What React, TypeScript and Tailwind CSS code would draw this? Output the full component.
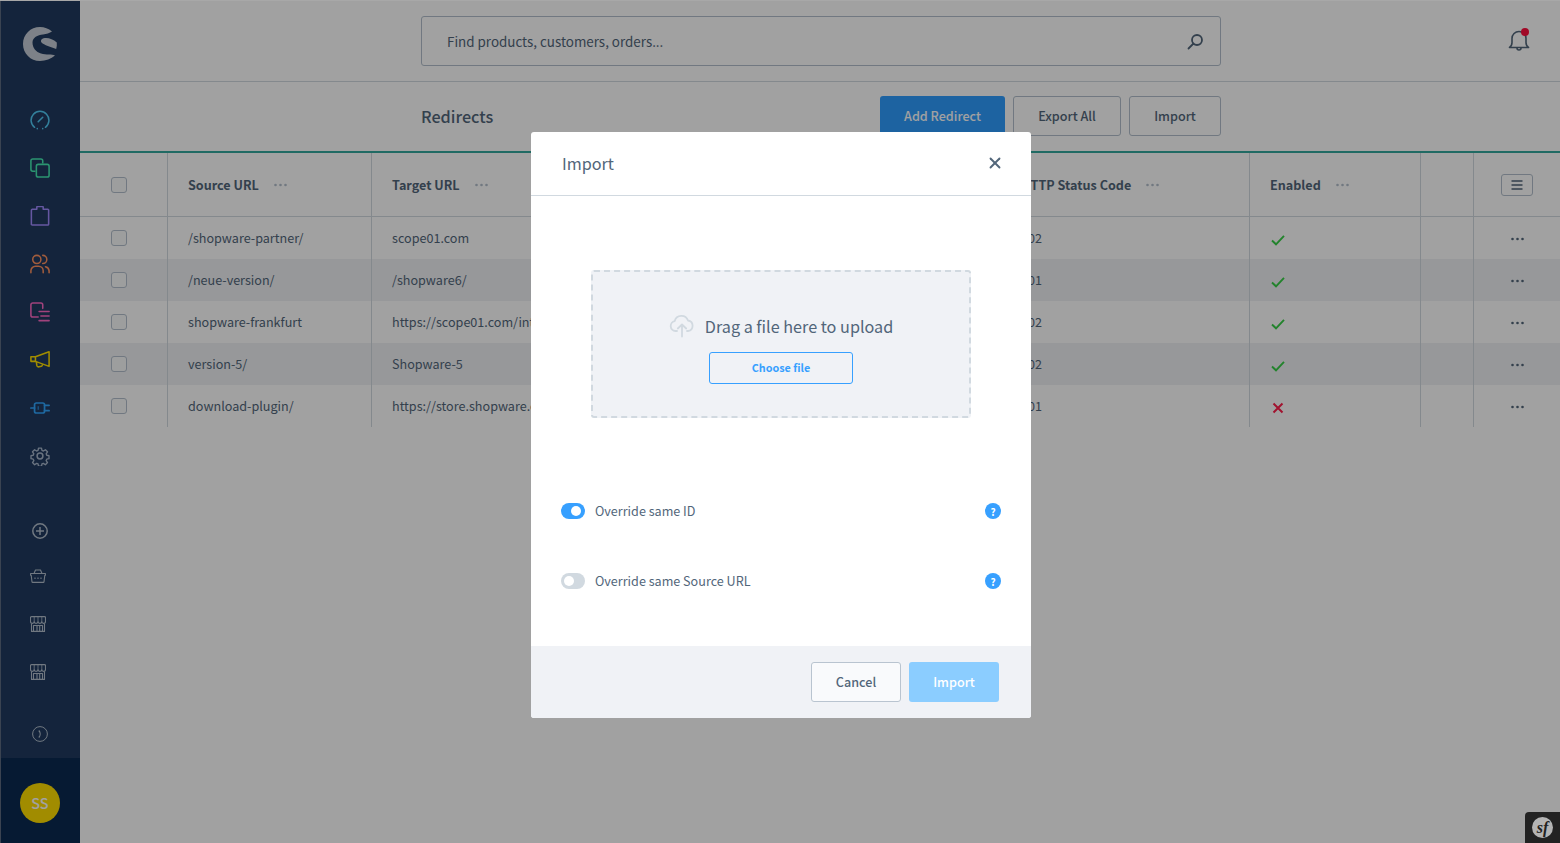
import { X } from 'lucide-react';

const FONT = "font-['Noto_Sans_CJK_SC','Source_Sans_Pro','Noto_Sans',sans-serif]";

const GRID = 'grid grid-cols-[88px_204px_629px_249px_171px_53px_86px]';

const rows = [
  { source: '/shopware-partner/', target: 'scope01.com', code: '302', enabled: true },
  { source: '/neue-version/', target: '/shopware6/', code: '301', enabled: true },
  { source: 'shopware-frankfurt', target: 'https://scope01.com/international/', code: '302', enabled: true },
  { source: 'version-5/', target: 'Shopware-5', code: '302', enabled: true },
  { source: 'download-plugin/', target: 'https://store.shopware.com/', code: '301', enabled: false },
];

function Dots({ className }: { className: string }) {
  return (
    <svg width="13" height="4" viewBox="0 0 13 4" className={className} fill="currentColor">
      <circle cx="1.500" cy="2" r="1.300" />
      <circle cx="6.500" cy="2" r="1.300" />
      <circle cx="11.500" cy="2" r="1.300" />
    </svg>
  );
}

function Checkbox() {
  return <div className="h-4 w-4 rounded-[3px] border border-[#b3bfcc] bg-[#f9fafb]" />;
}

function HeaderCell({ label }: { label: string }) {
  return (
    <div className="flex items-center border-r border-[#d1d9e0] pt-[1px] pl-5">
      <span className="text-[12.6px] font-bold whitespace-nowrap text-[#52667a]">{label}</span>
      <Dots className="ml-[15px] text-[#b3bfcc]" />
    </div>
  );
}

function Sidebar() {
  const navClass = 'flex h-12 items-center justify-center';
  return (
    <aside className="flex h-full w-20 shrink-0 flex-col border-l border-[#5c6b80] bg-[#203a60]">
      <div className="flex h-[95px] items-center justify-center pr-[1px] pb-[9px]">
        <svg width="34" height="34" viewBox="0 0 34 34" fill="#ffffff" fillOpacity="0.75">
          <path d="M29 4.500C25.500 1.500 21.500 0 17 0C7.500 0 0 7.500 0 17C0 26.500 7.500 34 17 34C22.800 34 28 31.700 32 28.500C29 27 23 28 18 26.500C13 25 9.500 21 9.500 15.500C9.500 10.500 14.500 8 20 7.500C23.500 7.200 26.500 6 29 4.500Z" />
          <path d="M18.500 12.500C22 9.500 29 11.200 33.800 15.500C34 17.500 33.800 19.700 33.200 22C28 20 21 18 18.500 15.500C17.800 14.500 17.800 13.300 18.500 12.500Z" />
        </svg>
      </div>

      <div className="pr-[1px]">
        <div className={navClass}>
          <svg width="20" height="20" viewBox="0 0 22 22" fill="none" stroke="#51cbf6" strokeWidth="1.700" strokeLinecap="round">
            <path d="M5 19A9.800 9.800 0 1 1 17 19" />
            <path d="M8 20.500h0M14 20.500h0M9 13L14 8" />
          </svg>
        </div>
        <div className={navClass}>
          <svg width="20" height="20" viewBox="0 0 22 22" fill="none" stroke="#44ebb2" strokeWidth="1.700" strokeLinejoin="round">
            <path d="M6 14.500H3a2 2 0 0 1-2-2V3a2 2 0 0 1 2-2h9a2 2 0 0 1 2 2v3" />
            <rect x="7" y="7" width="14" height="14" rx="2" />
          </svg>
        </div>
        <div className={navClass}>
          <svg width="20" height="20" viewBox="0 0 22 22" fill="none" stroke="#a08aff" strokeWidth="1.700" strokeLinejoin="round">
            <path d="M2.500 3.500H7.500V1.500a1 1 0 0 1 1-1h5a1 1 0 0 1 1 1v2h5a1.500 1.500 0 0 1 1 1V20a1 1 0 0 1-1 1H2.500a1 1 0 0 1-1-1V5a1.500 1.500 0 0 1 1-1.500Z" />
          </svg>
        </div>
        <div className={navClass}>
          <svg width="20" height="20" viewBox="0 0 22 22" fill="none" stroke="#ff925f" strokeWidth="1.700" strokeLinecap="round">
            <circle cx="7.500" cy="6" r="4.500" />
            <path d="M1 20.500v-2a5 5 0 0 1 5-5h3.500a5 5 0 0 1 5 5v2" />
            <path d="M14 1.500a4.500 4.500 0 0 1 0 9M17 14a5 5 0 0 1 4 4.500v2" />
          </svg>
        </div>
        <div className={navClass}>
          <svg width="20" height="20" viewBox="0 0 22 22" fill="none" stroke="#ff6ac5" strokeWidth="1.700" strokeLinecap="round">
            <path d="M9 16.500H3a2 2 0 0 1-2-2V3a2 2 0 0 1 2-2h9a2 2 0 0 1 2 2v4" />
            <path d="M10 10.500h11M12 15.500h9M10 20.500h11" />
          </svg>
        </div>
        <div className={navClass}>
          <svg width="20" height="20" viewBox="0 0 22 22" fill="none" stroke="#ffde00" strokeWidth="1.700" strokeLinejoin="round">
            <path d="M1 7.500h5v5H1zM6 7.500L21 2v16l-15-5.500z" />
            <path d="M7 13l.5 4a2 2 0 0 0 2.500 1.500l2.500-.7a1.500 1.500 0 0 0 1-2" />
          </svg>
        </div>
        <div className={navClass}>
          <svg width="20" height="20" viewBox="0 0 22 22" fill="none" stroke="#31a7ff" strokeWidth="1.900" strokeLinecap="round">
            <rect x="5" y="5.500" width="11" height="11" rx="2" />
            <path d="M1 11h4M16 8h5M16 14h5" />
            <path d="M9 9.500v3" strokeWidth="1" />
          </svg>
        </div>
        <div className={navClass}>
          <svg width="20" height="20" viewBox="0 0 24 24" fill="none" stroke="#a8b7cb" strokeWidth="1.800" strokeLinejoin="round">
            <circle cx="12" cy="12" r="3.500" />
            <path d="M10 1.500h4l.6 3.100 1.900.8 2.700-1.800 2.800 2.800-1.800 2.700.8 1.900 3 .6v4l-3 .6-.8 1.900 1.800 2.700-2.800 2.800-2.700-1.800-1.900.8-.6 3h-4l-.6-3-1.900-.8-2.700 1.800-2.800-2.800 1.800-2.700-.8-1.900-3-.6v-4l3-.6.8-1.900-1.800-2.700 2.800-2.800 2.700 1.800 1.900-.8z" transform="translate(1.200 1.200) scale(0.9)" />
          </svg>
        </div>

        <div className="mt-[27px] flex h-12 items-center justify-center">
          <svg width="16" height="16" viewBox="0 0 16 16" fill="none" stroke="#b3bfcc" strokeWidth="1.500">
            <circle cx="8" cy="8" r="7.200" />
            <path d="M8 4v8M4 8h8" />
          </svg>
        </div>
        <div className="flex h-[42px] items-center justify-center pr-1">
          <svg width="16" height="14" viewBox="0 0 16 14" fill="none" stroke="#b3bfcc" strokeWidth="1.100" strokeLinejoin="round">
            <path d="M.6 4.500h14.800v1.800h-.6l-.8 6.600a.6.6 0 0 1-.6.5H2.600a.6.6 0 0 1-.6-.5l-.8-6.600H.6z" />
            <path d="M4 4.500L5.500 1h5L12 4.500" />
            <path d="M5 8.500v1.500M8 8.500v1.500M11 8.500v1.500" />
          </svg>
        </div>
        {[0, 1].map((i) => (
          <div key={i} className={`flex h-12 items-center justify-center pr-1 ${i === 0 ? 'mt-[3px]' : ''}`}>
            <svg width="16" height="16" viewBox="0 0 16 16" fill="none" stroke="#b3bfcc" strokeWidth="1.100" strokeLinejoin="round">
              <path d="M1.500.6h13a1 1 0 0 1 1 1V5.500a1.800 1.800 0 0 1-3.700 0 1.900 1.900 0 0 1-3.800 0 1.900 1.900 0 0 1-3.800 0 1.800 1.800 0 0 1-3.700 0V1.600a1 1 0 0 1 1-1Z" />
              <path d="M4.200 .6v4.900M8 .6v4.900M11.800 .6v4.900" strokeWidth="0.800" />
              <path d="M1.500 7.500v7.900h13V7.500M7 15.400V9.500h5.500v5.900M3.500 15.400V9.500H7M9.700 9.500v5.900" />
            </svg>
          </div>
        ))}
      </div>

      <div className="mt-auto flex h-12 items-center justify-center pr-[1px]">
        <svg width="16" height="16" viewBox="0 0 16 16" fill="none" stroke="#b3bfcc" strokeWidth="1">
          <circle cx="8" cy="8" r="7.400" />
          <path d="M6.800 4.500C8.600 6.500 8.600 9.500 6.800 11.500" strokeWidth="1.200" />
        </svg>
      </div>
      <div className="flex h-[85px] items-center justify-center bg-[#0a2a52] pt-[5px] pr-[1px]">
        <div className="flex h-10 w-10 items-center justify-center rounded-full bg-[#ffde00] text-[14.4px] font-medium text-white">
          SS
        </div>
      </div>
    </aside>
  );
}

function Toggle({ on }: { on: boolean }) {
  return (
    <div className={`flex h-4 w-6 items-center rounded-full ${on ? 'justify-end bg-[#37a0ff] pr-[4px]' : 'justify-start bg-[#d1d9e0] pl-[3px]'}`}>
      <div className="h-[10px] w-[10px] rounded-full bg-white" />
    </div>
  );
}

function SwitchRow({ label, on, className }: { label: string; on: boolean; className: string }) {
  return (
    <div className={`flex h-4 items-center ${className}`}>
      <Toggle on={on} />
      <span className="ml-[10px] text-[12.6px] text-[#52667a]">{label}</span>
      <div className="ml-auto flex h-4 w-4 items-center justify-center rounded-full bg-[#37a0ff] text-[10px] font-bold text-white">
        ?
      </div>
    </div>
  );
}

function ImportModal() {
  return (
    <div className="flex h-[586px] w-[500px] flex-col overflow-hidden rounded-[3px] bg-white">
      <div className="flex h-16 shrink-0 items-center justify-between border-b border-[#d1d9e0] pr-[27px] pl-[31px]">
        <span className="text-[16.2px] text-[#52667a]">Import</span>
        <X size={18} strokeWidth={2.5} className="-mt-[1px] text-[#52667a]" />
      </div>

      <div className="flex-1 px-[30px]">
        <div className="mx-[30px] mt-[74px] flex h-[148px] flex-col items-center rounded-[3px] border-2 border-dashed border-[#d1d9e0] bg-[#f0f2f6] pt-[42px]">
          <div className="flex h-6 items-center">
            <svg width="26" height="24" viewBox="0 0 26 24" fill="none" stroke="#d1d9e0" strokeWidth="1.800" strokeLinecap="round" strokeLinejoin="round">
              <path d="M8 17H6.500a5 5 0 0 1-.8-9.900A7 7 0 0 1 19 6.500a5.300 5.300 0 0 1 0 10.500h-1" />
              <path d="M13 22.500V10.500M8.800 14.500L13 10.500l4.200 4" />
            </svg>
            <span className="ml-[10px] text-[16.2px] text-[#52667a]">Drag a file here to upload</span>
          </div>
          <div className="mt-[14px] flex h-8 w-[144px] items-center justify-center rounded-[3px] border border-[#37a0ff] pb-[1px] text-[10.8px] font-semibold text-[#37a0ff]">
            Choose file
          </div>
        </div>

        <SwitchRow label="Override same ID" on className="mt-[85px]" />
        <SwitchRow label="Override same Source URL" on={false} className="mt-[54px]" />
      </div>

      <div className="flex h-[72px] shrink-0 items-center justify-end gap-2 bg-[#f0f2f6] pr-8">
        <div className="flex h-10 w-[90px] items-center justify-center rounded-[3px] border border-[#b9c4d0] bg-[#f9fafc] text-[12.6px] font-medium text-[#52667a]">
          Cancel
        </div>
        <div className="flex h-10 w-[90px] items-center justify-center rounded-[3px] bg-[#8bcdff] text-[12.6px] font-medium text-white">
          Import
        </div>
      </div>
    </div>
  );
}

export default function App() {
  return (
    <div className={`relative flex h-[843px] w-full overflow-hidden border-t border-[#a8a8a8] bg-white ${FONT}`}>
      <Sidebar />

      <main className="flex min-w-0 flex-1 flex-col">
        <header className="flex h-[81px] shrink-0 items-center border-b border-[#d1d9e0]">
          <div className="ml-[341px] flex h-[50px] w-[800px] items-center justify-between rounded-[3px] border border-[#b3bfcc] pr-4 pl-[25px]">
            <span className="pt-[1px] text-[13.4px] text-[#52667a]">Find products, customers, orders...</span>
            <svg width="17" height="17" viewBox="0 0 17 17" fill="none" stroke="#52667a" strokeWidth="1.800" strokeLinecap="round">
              <circle cx="10" cy="7" r="5" />
              <path d="M6.500 10.500L1.500 15.500" />
            </svg>
          </div>
          <div className="relative ml-[287px]">
            <svg width="22" height="22" viewBox="0 0 22 22" fill="none" stroke="#52667a" strokeWidth="1.600" strokeLinejoin="round" strokeLinecap="round">
              <path d="M1.500 17.500c1.500-1 2.500-2.500 2.500-5V8.500a7 7 0 0 1 14 0v4c0 2.500 1 4 2.500 5Z" />
              <path d="M9 18a2 2 0 0 0 4 0" />
            </svg>
            <span className="absolute top-[-2px] right-[1px] h-2 w-2 rounded-full bg-[#ff0f3f]" />
          </div>
        </header>

        <div className="flex h-[71px] shrink-0 items-center border-b-2 border-[#33a89d] pb-[1px]">
          <h1 className="ml-[341px] text-[16.2px] font-medium text-[#52667a]">Redirects</h1>
          <div className="mr-[339px] ml-auto flex gap-2">
            <div className="flex h-10 w-[125px] items-center justify-center rounded-[3px] bg-[#2f9dff] text-[12.6px] font-medium text-white">
              Add Redirect
            </div>
            <div className="flex h-10 w-[108px] items-center justify-center rounded-[3px] border border-[#b3bfcc] text-[12.6px] font-medium text-[#52667a]">
              Export All
            </div>
            <div className="flex h-10 w-[92px] items-center justify-center rounded-[3px] border border-[#b3bfcc] text-[12.6px] font-medium text-[#52667a]">
              Import
            </div>
          </div>
        </div>

        <div>
          <div className={`${GRID} h-16 border-b border-[#d1d9e0]`}>
            <div className="flex items-center border-r border-[#d1d9e0] pl-[31px]">
              <Checkbox />
            </div>
            <HeaderCell label="Source URL" />
            <HeaderCell label="Target URL" />
            <HeaderCell label="HTTP Status Code" />
            <HeaderCell label="Enabled" />
            <div className="border-r border-[#d1d9e0]" />
            <div className="flex items-center justify-center">
              <div className="flex h-[22px] w-8 items-center justify-center rounded-[3px] border border-[#b3bfcc]">
                <svg width="14" height="12" viewBox="0 0 14 12" stroke="#52667a" strokeWidth="1.300">
                  <path d="M1.500 2h11M1.500 6h11M1.500 10h11" />
                </svg>
              </div>
            </div>
          </div>

          {rows.map((row, i) => (
            <div key={row.source} className={`${GRID} h-[42px] text-[12.6px] text-[#52667a] ${i % 2 === 1 ? 'bg-[#eff1f4]' : ''}`}>
              <div className="flex items-center border-r border-[#d1d9e0] pl-[31px]">
                <Checkbox />
              </div>
              <div className="flex items-center border-r border-[#d1d9e0] pl-5 whitespace-nowrap">{row.source}</div>
              <div className="flex items-center border-r border-[#d1d9e0] pl-5 whitespace-nowrap">{row.target}</div>
              <div className="flex items-center border-r border-[#d1d9e0] pl-5">{row.code}</div>
              <div className="flex items-center border-r border-[#d1d9e0] pt-[3px] pl-[21px]">
                {row.enabled ? (
                  <svg width="14" height="12" viewBox="0 0 14 12" fill="none" stroke="#37d046" strokeWidth="1.900">
                    <path d="M1 6.500L5 10.300L13 1.800" />
                  </svg>
                ) : (
                  <svg width="12" height="12" viewBox="0 0 12 12" fill="none" stroke="#ff1f4b" strokeWidth="2" className="ml-[1px]">
                    <path d="M1.500 1.500L10.500 10.500M10.500 1.500L1.500 10.500" />
                  </svg>
                )}
              </div>
              <div className="border-r border-[#d1d9e0]" />
              <div className="flex items-center justify-center pt-[2px]">
                <Dots className="text-[#52667a]" />
              </div>
            </div>
          ))}
        </div>
      </main>

      {/* backdrop and modal sit over the page */}
      <div className="absolute inset-0 bg-black/[0.37]" />
      <div className="absolute inset-0 flex items-start justify-center pt-[131px] pl-[2px]">
        <ImportModal />
      </div>

      <div className="absolute right-0 bottom-0 flex h-[31px] w-[35px] items-center justify-center rounded-tl-[4px] bg-[#222222]">
        <div className="flex h-[21px] w-[21px] items-center justify-center rounded-full bg-[#b4b4b4] font-['Liberation_Serif',serif] text-[16px] font-bold text-[#222222] italic">
          sf
        </div>
      </div>
    </div>
  );
}
